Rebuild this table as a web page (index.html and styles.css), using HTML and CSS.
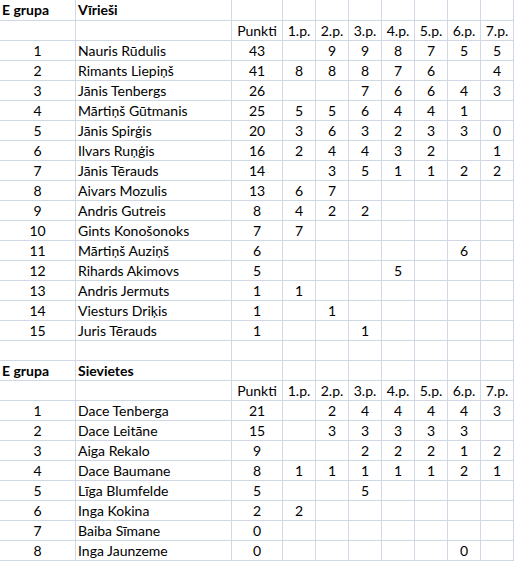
FILE: index.html
```html
<!DOCTYPE html>
<html lang="lv">
<head>
<meta charset="utf-8">
<title>E grupa</title>
<link rel="stylesheet" href="styles.css">
</head>
<body>
<div class="sheet">
  <div class="row first"><div class="c l b">E grupa</div><div class="c l b">Vīrieši</div><div class="c"></div><div class="c"></div><div class="c"></div><div class="c"></div><div class="c"></div><div class="c"></div><div class="c"></div><div class="c"></div></div>
  <div class="row"><div class="c"></div><div class="c"></div><div class="c">Punkti</div><div class="c">1.p.</div><div class="c">2.p.</div><div class="c">3.p.</div><div class="c">4.p.</div><div class="c">5.p.</div><div class="c">6.p.</div><div class="c">7.p.</div></div>
  <div class="row"><div class="c">1</div><div class="c l">Nauris Rūdulis</div><div class="c">43</div><div class="c"></div><div class="c">9</div><div class="c">9</div><div class="c">8</div><div class="c">7</div><div class="c">5</div><div class="c">5</div></div>
  <div class="row"><div class="c">2</div><div class="c l">Rimants Liepiņš</div><div class="c">41</div><div class="c">8</div><div class="c">8</div><div class="c">8</div><div class="c">7</div><div class="c">6</div><div class="c"></div><div class="c">4</div></div>
  <div class="row"><div class="c">3</div><div class="c l">Jānis Tenbergs</div><div class="c">26</div><div class="c"></div><div class="c"></div><div class="c">7</div><div class="c">6</div><div class="c">6</div><div class="c">4</div><div class="c">3</div></div>
  <div class="row"><div class="c">4</div><div class="c l">Mārtiņš Gūtmanis</div><div class="c">25</div><div class="c">5</div><div class="c">5</div><div class="c">6</div><div class="c">4</div><div class="c">4</div><div class="c">1</div><div class="c"></div></div>
  <div class="row"><div class="c">5</div><div class="c l">Jānis Spirģis</div><div class="c">20</div><div class="c">3</div><div class="c">6</div><div class="c">3</div><div class="c">2</div><div class="c">3</div><div class="c">3</div><div class="c">0</div></div>
  <div class="row"><div class="c">6</div><div class="c l">Ilvars Ruņģis</div><div class="c">16</div><div class="c">2</div><div class="c">4</div><div class="c">4</div><div class="c">3</div><div class="c">2</div><div class="c"></div><div class="c">1</div></div>
  <div class="row"><div class="c">7</div><div class="c l">Jānis Tērauds</div><div class="c">14</div><div class="c"></div><div class="c">3</div><div class="c">5</div><div class="c">1</div><div class="c">1</div><div class="c">2</div><div class="c">2</div></div>
  <div class="row"><div class="c">8</div><div class="c l">Aivars Mozulis</div><div class="c">13</div><div class="c">6</div><div class="c">7</div><div class="c"></div><div class="c"></div><div class="c"></div><div class="c"></div><div class="c"></div></div>
  <div class="row"><div class="c">9</div><div class="c l">Andris Gutreis</div><div class="c">8</div><div class="c">4</div><div class="c">2</div><div class="c">2</div><div class="c"></div><div class="c"></div><div class="c"></div><div class="c"></div></div>
  <div class="row"><div class="c">10</div><div class="c l">Gints Konošonoks</div><div class="c">7</div><div class="c">7</div><div class="c"></div><div class="c"></div><div class="c"></div><div class="c"></div><div class="c"></div><div class="c"></div></div>
  <div class="row"><div class="c">11</div><div class="c l">Mārtiņš Auziņš</div><div class="c">6</div><div class="c"></div><div class="c"></div><div class="c"></div><div class="c"></div><div class="c"></div><div class="c">6</div><div class="c"></div></div>
  <div class="row"><div class="c">12</div><div class="c l">Rihards Akimovs</div><div class="c">5</div><div class="c"></div><div class="c"></div><div class="c"></div><div class="c">5</div><div class="c"></div><div class="c"></div><div class="c"></div></div>
  <div class="row"><div class="c">13</div><div class="c l">Andris Jermuts</div><div class="c">1</div><div class="c">1</div><div class="c"></div><div class="c"></div><div class="c"></div><div class="c"></div><div class="c"></div><div class="c"></div></div>
  <div class="row"><div class="c">14</div><div class="c l">Viesturs Driķis</div><div class="c">1</div><div class="c"></div><div class="c">1</div><div class="c"></div><div class="c"></div><div class="c"></div><div class="c"></div><div class="c"></div></div>
  <div class="row"><div class="c">15</div><div class="c l">Juris Tērauds</div><div class="c">1</div><div class="c"></div><div class="c"></div><div class="c">1</div><div class="c"></div><div class="c"></div><div class="c"></div><div class="c"></div></div>
  <div class="row"><div class="c"></div><div class="c"></div><div class="c"></div><div class="c"></div><div class="c"></div><div class="c"></div><div class="c"></div><div class="c"></div><div class="c"></div><div class="c"></div></div>
  <div class="row"><div class="c l b">E grupa</div><div class="c l b">Sievietes</div><div class="c"></div><div class="c"></div><div class="c"></div><div class="c"></div><div class="c"></div><div class="c"></div><div class="c"></div><div class="c"></div></div>
  <div class="row"><div class="c"></div><div class="c"></div><div class="c">Punkti</div><div class="c">1.p.</div><div class="c">2.p.</div><div class="c">3.p.</div><div class="c">4.p.</div><div class="c">5.p.</div><div class="c">6.p.</div><div class="c">7.p.</div></div>
  <div class="row"><div class="c">1</div><div class="c l">Dace Tenberga</div><div class="c">21</div><div class="c"></div><div class="c">2</div><div class="c">4</div><div class="c">4</div><div class="c">4</div><div class="c">4</div><div class="c">3</div></div>
  <div class="row"><div class="c">2</div><div class="c l">Dace Leitāne</div><div class="c">15</div><div class="c"></div><div class="c">3</div><div class="c">3</div><div class="c">3</div><div class="c">3</div><div class="c">3</div><div class="c"></div></div>
  <div class="row"><div class="c">3</div><div class="c l">Aiga Rekalo</div><div class="c">9</div><div class="c"></div><div class="c"></div><div class="c">2</div><div class="c">2</div><div class="c">2</div><div class="c">1</div><div class="c">2</div></div>
  <div class="row"><div class="c">4</div><div class="c l">Dace Baumane</div><div class="c">8</div><div class="c">1</div><div class="c">1</div><div class="c">1</div><div class="c">1</div><div class="c">1</div><div class="c">2</div><div class="c">1</div></div>
  <div class="row"><div class="c">5</div><div class="c l">Līga Blumfelde</div><div class="c">5</div><div class="c"></div><div class="c"></div><div class="c">5</div><div class="c"></div><div class="c"></div><div class="c"></div><div class="c"></div></div>
  <div class="row"><div class="c">6</div><div class="c l">Inga Kokina</div><div class="c">2</div><div class="c">2</div><div class="c"></div><div class="c"></div><div class="c"></div><div class="c"></div><div class="c"></div><div class="c"></div></div>
  <div class="row"><div class="c">7</div><div class="c l">Baiba Sīmane</div><div class="c">0</div><div class="c"></div><div class="c"></div><div class="c"></div><div class="c"></div><div class="c"></div><div class="c"></div><div class="c"></div></div>
  <div class="row"><div class="c">8</div><div class="c l">Inga Jaunzeme</div><div class="c">0</div><div class="c"></div><div class="c"></div><div class="c"></div><div class="c"></div><div class="c"></div><div class="c">0</div><div class="c"></div></div>
</div>
</body>
</html>
```
FILE: styles.css
```css
html, body {
  margin: 0;
  padding: 0;
  background: #ffffff;
}

body {
  font-family: Lato, "Open Sans", "Liberation Sans", sans-serif;
  font-size: 14px;
  color: #000000;
  overflow: hidden;
}

.sheet {
  display: flex;
  flex-direction: column;
  width: 514px;
}

.row {
  display: grid;
  grid-template-columns: 76px 156px 51px repeat(7, 33px);
  height: 20px;
}

.row.first {
  height: 21px;
}

.c {
  box-sizing: border-box;
  border-right: 1px solid #d0d7e5;
  border-bottom: 1px solid #d0d7e5;
  line-height: 19px;
  text-align: center;
  white-space: nowrap;
  overflow: hidden;
  padding: 0 2px;
}

.row.first .c {
  line-height: 20px;
}

.c.l {
  text-align: left;
}

.c.b {
  font-weight: bold;
}
```
